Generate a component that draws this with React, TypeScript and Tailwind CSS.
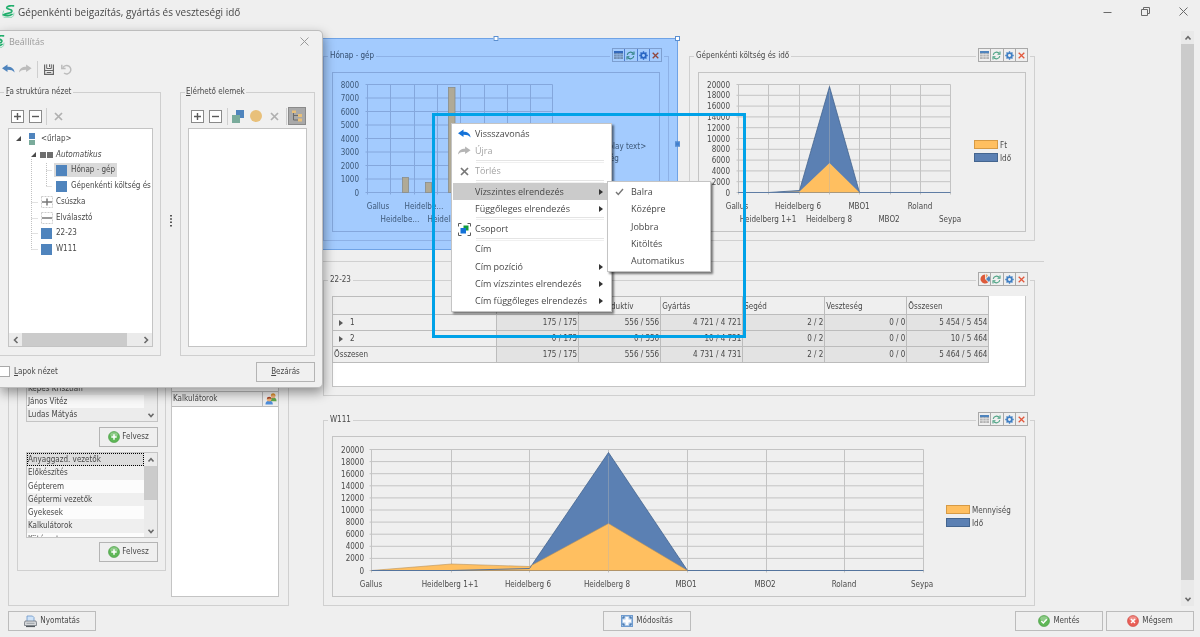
import type { ReactNode } from 'react';

type IconProps = { className?: string };

const AppLogo = ({ className = '' }: IconProps) => (
  <svg viewBox="0 0 13 13" className={`h-[13px] w-[13px] shrink-0 ${className}`} fill="none" stroke="#1fae6b" strokeLinecap="round">
    <path d="M1 11 Q0 9 1.5 6 M2 12.300 H10 Q12 11.500 12 8" stroke="#8fdab8" strokeWidth="1" />
    <path d="M11.500 .9 C8 .3 4.500 1.300 4.800 3 C5.200 4.600 10.500 4 9.800 6.500 C9 9 4 7.800 1.500 9.800 C4 11.200 8 10.800 10 9.400" strokeWidth="1.700" />
  </svg>
);

const Undo = ({ className = '' }: IconProps) => (
  <svg viewBox="0 0 13 10" className={`h-[10px] w-[13px] ${className}`} fill="currentColor">
    <path d="M0 4.300 L5.500 .6 V2.800 C9.500 2.800 12.300 4.600 12.600 8.600 C11 6.400 9 5.800 5.500 5.800 V8 Z" />
  </svg>
);

const Redo = ({ className = '' }: IconProps) => (
  <svg viewBox="0 0 13 10" className={`h-[10px] w-[13px] ${className}`} fill="currentColor">
    <path d="M12.600 4.300 L7.100 .6 V2.800 C3.100 2.800 .3 4.600 0 8.600 C1.600 6.400 3.600 5.800 7.100 5.800 V8 Z" />
  </svg>
);

const Cross = ({ className = '' }: IconProps) => (
  <svg viewBox="0 0 9 9" className={`h-[9px] w-[9px] ${className}`} stroke="currentColor" strokeWidth="1.700">
    <path d="M1 1 L8 8 M8 1 L1 8" />
  </svg>
);

const ThinCross = ({ className = '' }: IconProps) => (
  <svg viewBox="0 0 9 9" className={`h-[9px] w-[9px] ${className}`} stroke="currentColor" strokeWidth="1">
    <path d="M.5 .5 L8.500 8.500 M8.500 .5 L.5 8.500" />
  </svg>
);

const Save = () => (
  <svg viewBox="0 0 10 11" className="h-[11px] w-[10px]" fill="none" stroke="#666">
    <path d="M.6 .5 V10.400 H9.400 V.5" strokeWidth="1.200" />
    <path d="M2.700 .3 V4.500 H7.300 V.3 M5.500 .3 V3" />
    <path d="M.6 6.500 H9.400 M2.700 8.500 H7.300" />
  </svg>
);

const Reset = () => (
  <svg viewBox="0 0 11 11" className="h-[11px] w-[11px]" fill="none" stroke="#bcbcbc" strokeWidth="1.500">
    <path d="M2 3.600 A4.200 4.200 0 1 1 3 9" />
    <path d="M.8 .8 V4.400 H4.600" />
  </svg>
);

const ExpandBox = ({ plus = false }: { plus?: boolean }) => (
  <svg viewBox="0 0 13 13" className="h-[13px] w-[13px]" fill="#fff" stroke="#8a8a8a">
    <rect x=".5" y=".5" width="12" height="12" />
    <path d={plus ? 'M3 6.500 H10 M6.500 3 V10' : 'M3 6.500 H10'} stroke="#5a5a5a" strokeWidth="1.400" />
  </svg>
);

const GroupSquares = () => (
  <svg viewBox="0 0 14 14" className="h-[14px] w-[14px]">
    <rect x="5" y="1" width="8" height="8" fill="#4f84bd" />
    <rect x="1" y="6" width="8" height="8" fill="#7aab9b" />
  </svg>
);

const TreeGlyph = () => (
  <svg viewBox="0 0 12 12" className="h-[12px] w-[12px]">
    <path d="M2.500 2 V10 H7 M2.500 5.500 H7" fill="none" stroke="#6b6b6b" />
    <path d="M1 .5 H5 V3 H1 Z M7 4 H11 V7 H7 Z M7 8.500 H11 V11.500 H7 Z" fill="#e8c07a" />
  </svg>
);

const CsoportIcon = () => (
  <svg viewBox="0 0 13 13" className="h-[13px] w-[13px]">
    <path d="M3.500 .5 H.5 V3.500 M9.500 .5 H12.500 V3.500 M3.500 12.500 H.5 V9.500 M9.500 12.500 H12.500 V9.500" fill="none" stroke="#5a5a5a" />
    <rect x="5.500" y="2.500" width="5" height="5" fill="#0f9b3a" />
    <rect x="2.500" y="5" width="5.500" height="5.500" fill="#1472d8" />
  </svg>
);

const Check = () => (
  <svg viewBox="0 0 9 8" className="h-[8px] w-[9px]" fill="none" stroke="#777" strokeWidth="1.400">
    <path d="M1 4 L3.300 6.500 L8 1" />
  </svg>
);

const GridIcon = () => (
  <svg viewBox="0 0 9 8" className="h-[8px] w-[9px]">
    <rect width="9" height="8" fill="#b3b3b3" />
    <path d="M0 3.600 H9 M0 5.700 H9 M3 2 V8 M6 2 V8" stroke="#e6e6e6" strokeWidth=".7" />
    <rect width="9" height="2.200" fill="#4f84bd" />
  </svg>
);

const PieIcon = () => (
  <svg viewBox="0 0 10 10" className="h-[10px] w-[10px]">
    <path d="M5 5 L5 .5 A4.500 4.500 0 1 0 8.200 8.200 Z" fill="#dd5a3a" />
    <path d="M5.800 4.500 V0 A4.500 4.500 0 0 1 8 1.300 Z" fill="#e9a070" />
    <path d="M6 4.900 L9 2 A4.500 4.500 0 0 1 9 7.900 Z" fill="#4f84bd" />
  </svg>
);

const RefreshIcon = () => (
  <svg viewBox="0 0 9 9" className="h-[9px] w-[9px]" fill="none" stroke="#4aa283" strokeWidth="1.100">
    <path d="M1.200 3.800 A3.400 3.400 0 0 1 7.300 2.600 M7.800 5.200 A3.400 3.400 0 0 1 1.700 6.400" />
    <path d="M8 .6 V3.200 H5.500 M1 8.400 V5.800 H3.500" />
  </svg>
);

const GearIcon = () => (
  <svg viewBox="0 0 10 10" className="h-[9px] w-[9px]" fill="none" stroke="#3f7fc4">
    <circle cx="5" cy="5" r="2.600" strokeWidth="1.900" />
    <path d="M5 .3 V2 M5 8 V9.700 M.3 5 H2 M8 5 H9.700 M1.700 1.700 L2.800 2.800 M7.200 7.200 L8.300 8.300 M8.300 1.700 L7.200 2.800 M2.800 7.200 L1.700 8.300" strokeWidth="1.500" />
  </svg>
);

const RedCross = () => (
  <svg viewBox="0 0 8 8" className="h-[7px] w-[7px]" stroke="#e2583c" strokeWidth="1.500">
    <path d="M.8 .8 L7.200 7.200 M7.200 .8 L.8 7.200" />
  </svg>
);

const Badge = ({ kind }: { kind: 'add' | 'ok' | 'no' }) => (
  <svg viewBox="0 0 12 12" className="h-[12px] w-[12px]">
    <circle cx="6" cy="6" r="5.500" fill={kind === 'no' ? '#ea5f57' : '#5fb757'} stroke={kind === 'no' ? '#c9463f' : '#459a40'} strokeWidth=".6" />
    <ellipse cx="6" cy="3.600" rx="3.800" ry="2.400" fill="#fff" opacity=".3" />
    <path
      d={kind === 'add' ? 'M6 3.300 V8.700 M3.300 6 H8.700' : kind === 'ok' ? 'M3.300 6 L5.300 8 L8.800 4.300' : 'M4 4 L8 8 M8 4 L4 8'}
      fill="none"
      stroke="#fff"
      strokeWidth="1.500"
    />
  </svg>
);

const Printer = () => (
  <svg viewBox="0 0 13 13" className="h-[13px] w-[13px]">
    <path d="M3 6 V1 H8.500 L10 2.500 V6" fill="#cfe3f8" stroke="#6a95c8" strokeWidth=".8" />
    <path d="M1 6 H12 L12.500 8 V10.500 H.5 V8 Z" fill="#d7d9dc" stroke="#70757c" strokeWidth=".8" />
    <path d="M2 11.500 H11" stroke="#555a60" strokeWidth="1.200" />
    <path d="M2.500 8.300 H10.500" stroke="#8b9096" strokeWidth=".8" />
  </svg>
);

const ModifyIcon = () => (
  <svg viewBox="0 0 12 12" className="h-[12px] w-[12px]">
    <rect x=".5" y=".5" width="11" height="11" fill="#a9c7e8" stroke="#6f9bce" />
    <path d="M4.500 2 H7.500 V4.500 H10 V7.500 H7.500 V10 H4.500 V7.500 H2 V4.500 H4.500 Z" fill="#fbfcfe" />
    <path d="M2 2 H3.800 M2 2 V3.800 M10 2 H8.200 M10 2 V3.800 M2 10 H3.800 M2 10 V8.200 M10 10 H8.200 M10 10 V8.200" stroke="#2f65a3" strokeWidth="1" />
  </svg>
);

const People = () => (
  <svg viewBox="0 0 13 13" className="h-[12px] w-[12px]">
    <path d="M5.500 9 Q6 5 9 5 Q12.500 5 12.500 9 Z" fill="#63a94c" />
    <circle cx="8.800" cy="3.200" r="2.500" fill="#f0b27a" />
    <path d="M6.200 3 Q6.500 .3 9 .4 Q11.600 .6 11.400 3.300 Q10 1.800 6.200 3" fill="#d99130" />
    <path d="M.5 12.500 Q.5 8.500 4.500 8.500 Q8.500 8.500 8.500 12.500 Z" fill="#4f8fdc" />
    <circle cx="4.500" cy="6.800" r="2.500" fill="#f0b27a" />
    <path d="M2 6.600 Q2 4 4.500 4 Q7 4 7 6.600 Q5.500 5.400 2 6.600" fill="#a8452a" />
  </svg>
);

const Chevron = ({ d }: { d: string }) => (
  <svg viewBox="0 0 8 8" className="h-[8px] w-[8px]" fill="none" stroke="#6a6a6a" strokeWidth="1.600">
    <path d={d} />
  </svg>
);
const UP = 'M1.500 5.500 L4 2.700 L6.500 5.500';
const DOWN = 'M1.500 2.700 L4 5.500 L6.500 2.700';
const LEFT = 'M5.500 1 L2.500 4 L5.500 7';
const RIGHT = 'M2.500 1 L5.500 4 L2.500 7';

const Caret = ({ className = '' }: IconProps) => (
  <svg viewBox="0 0 4 6" className={`h-[6px] w-[4px] ${className}`} fill="currentColor">
    <path d="M0 0 L4 3 L0 6 Z" />
  </svg>
);

/* ---------- charts ---------- */

type Axis = { xs: number[]; top: number; bottom: number; labels: string[]; labelX: number; line: string; text: string };

function Plot({ xs, top, bottom, labels, labelX, line, text }: Axis) {
  const step = (bottom - top) / (labels.length - 1);
  return (
    <g>
      {labels.map((l, i) => (
        <g key={l}>
          <line x1={xs[0] - 2} x2={xs[xs.length - 1]} y1={top + i * step} y2={top + i * step} stroke={line} />
          <text x={labelX} y={top + i * step + 3} textAnchor="end" fill={text}>{l}</text>
        </g>
      ))}
      {xs.map((x) => <line key={x} x1={x} x2={x} y1={top} y2={bottom + 2} stroke={line} />)}
    </g>
  );
}

const TWENTY = ['20000', '18000', '16000', '14000', '12000', '10000', '8000', '6000', '4000', '2000', '0'];
const EIGHT = ['8000', '7000', '6000', '5000', '4000', '3000', '2000', '1000', '0'];

function Labels({ items, fill }: { items: [string, number, number][]; fill: string }) {
  return <>{items.map(([t, x, y]) => <text key={t + x} x={x} y={y} textAnchor="middle" fill={fill}>{t}</text>)}</>;
}

function Legend({ x, y, items }: { x: number; y: number; items: [string, string, string][] }) {
  return (
    <>
      {items.map(([t, fill, stroke], i) => (
        <g key={t}>
          <rect x={x + 0.5} y={y + i * 13 + 0.5} width="23" height="8" fill={fill} stroke={stroke} />
          <text x={x + 26} y={y + i * 13 + 8} fill="#4a4a4a">{t}</text>
        </g>
      ))}
    </>
  );
}

const BarChart = () => (
  <svg viewBox="333 73 326 158" className="block w-full text-[8px]">
    <Plot xs={[367.5, 390.5, 414.5, 437.5, 460.5, 484.5, 507.5, 530.5, 552.5]} top={84.5} bottom={192.5} labels={EIGHT} labelX={359} line="#84a7dc" text="#3d5878" />
    {[[402.5, 177.5, 6], [425.5, 182.5, 6], [448.5, 87.5, 6.5]].map(([x, y, w]) => (
      <rect key={x} x={x} y={y} width={w} height={192.5 - y} fill="#b0aa96" stroke="#8a8d88" strokeWidth=".8" />
    ))}
    <Labels fill="#3d5878" items={[['Gallus', 378, 209], ['Heidelbe…', 424, 209], ['Heidelbe…', 400, 222], ['Heidelbe…', 447, 222]]} />
    <text x="580" y="149" fill="#3d5878">&lt;No display text&gt;</text>
    <text x="580" y="161" fill="#3d5878">Mennyiség</text>
  </svg>
);

const CostChart = () => (
  <svg viewBox="699 73 326 158" className="block w-full text-[8px]">
    <Plot xs={[738.5, 768.5, 799.5, 829.5, 859.5, 890.5, 920.5, 950.5]} top={84.5} bottom={192.5} labels={TWENTY} labelX={730} line="#c3c3c3" text="#4a4a4a" />
    <path d="M738.500 192.500 L768.500 192.500 L799.500 190.500 L829.500 86.500 L859.500 192.500 Z" fill="#5b80b3" stroke="#44658f" strokeWidth=".8" />
    <path d="M768.500 192.500 L799.500 191.500 L829.500 163 L859.500 192.500 Z" fill="#ffbf60" />
    <path d="M829.500 90 V194" stroke="#b5b5b5" strokeWidth=".7" opacity=".6" />
    <path d="M738.500 192.500 H799.500 M859.500 192.500 H950.500" stroke="#5f7da4" />
    <Labels
      fill="#4a4a4a"
      items={[['Gallus', 737, 209], ['Heidelberg 6', 798, 209], ['MBO1', 859, 209], ['Roland', 920, 209], ['Heidelberg 1+1', 768, 222], ['Heidelberg 8', 829, 222], ['MBO2', 889, 222], ['Seypa', 950, 222]]}
    />
    <Legend x={974} y={140} items={[['Ft', '#ffbf60', '#d69a45'], ['Idő', '#5b80b3', '#44658f']]} />
  </svg>
);

const QuantityChart = () => (
  <svg viewBox="333 437 692 159" className="block w-full text-[8px]">
    <Plot xs={[371.5, 451.5, 529.5, 608.5, 687.5, 766.5, 844.5, 923.5]} top={449.5} bottom={570.5} labels={TWENTY} labelX={364} line="#c3c3c3" text="#4a4a4a" />
    <path d="M451.500 570.500 L529.500 568.500 L608.500 452.500 L687.500 570.500 Z" fill="#5b80b3" stroke="#44658f" strokeWidth=".8" />
    <path d="M371.500 570.500 L451.500 564 L529.500 566.500 L608.500 523.500 L687.500 570.500 Z" fill="#ffbf60" stroke="#b9925a" strokeWidth=".6" />
    <path d="M371.500 570.500 H451.500 L529.500 568.500 L531.500 565.500 M687.500 570.500 H923.500" fill="none" stroke="#54749d" />
    <path d="M608.500 456 V572" stroke="#b5b5b5" strokeWidth=".7" opacity=".6" />
    <Labels
      fill="#4a4a4a"
      items={[['Gallus', 371, 587], ['Heidelberg 1+1', 450, 587], ['Heidelberg 6', 528, 587], ['Heidelberg 8', 607, 587], ['MBO1', 686, 587], ['MBO2', 765, 587], ['Roland', 844, 587], ['Seypa', 922, 587]]}
    />
    <Legend x={946} y={505} items={[['Mennyiség', '#ffbf60', '#d69a45'], ['Idő', '#5b80b3', '#44658f']]} />
  </svg>
);

/* ---------- panels ---------- */

function Panel({ title, selected = false, pie = false, className = '', children }: { title: string; selected?: boolean; pie?: boolean; className?: string; children: ReactNode }) {
  const tools: [string, ReactNode][] = [
    [pie ? 'Diagram' : 'Táblázat', pie ? <PieIcon /> : <GridIcon />],
    ['Frissítés', <RefreshIcon />],
    ['Beállítások', <GearIcon />],
    ['Eltávolítás', <RedCross />],
  ];
  return (
    <section className={`relative ${className}`}>
      <fieldset className={`min-w-0 border ${selected ? 'border-[#8db1e6]' : 'border-[#d0d0d0]'}`}>
        <legend className={`ml-[4px] px-[2px] leading-[12px] ${selected ? 'text-[#324b6b]' : ''}`}>{title}</legend>
        <div className={`mx-[8px] mt-[10px] mb-[8px] border ${selected ? 'border-[#84a7dc]' : 'border-[#c4c4c4]'}`}>{children}</div>
      </fieldset>
      <div className={`absolute -top-[2px] right-[5px] px-[2px] ${selected ? 'bg-[#a3cbfe]' : 'bg-[#efefef]'}`}>
        <div className={`flex h-[14px] w-[50px] divide-x border ${selected ? 'divide-[#7d9fd0] border-[#7d9fd0]' : 'divide-[#a9a9a9] border-[#a9a9a9]'}`}>
          {tools.map(([label, icon]) => (
            <button key={label} aria-label={label} className={`flex flex-1 items-center justify-center ${selected ? 'mix-blend-multiply' : ''}`}>{icon}</button>
          ))}
        </div>
      </div>
    </section>
  );
}

const HEAD = ['', 'Beigazítás', 'Nem produktív', 'Gyártás', 'Segéd', 'Veszteség', 'Összesen'];
const ROWS = [
  ['1', '175 / 175', '556 / 556', '4 721 / 4 721', '2 / 2', '0 / 0', '5 454 / 5 454'],
  ['2', '0 / 175', '0 / 556', '10 / 4 731', '0 / 2', '0 / 0', '10 / 5 464'],
  ['Összesen', '175 / 175', '556 / 556', '4 731 / 4 731', '2 / 2', '0 / 0', '5 464 / 5 464'],
];

const TimeTable = () => (
  <div className="h-[90px] bg-white">
    <table className="-mt-px -ml-px h-[67px] w-[95%] table-fixed border-collapse leading-[12px]">
      <colgroup>
        <col className="w-1/4" />
      </colgroup>
      <thead>
        <tr className="h-[18px] bg-[#efefef]">
          {HEAD.map((h) => (
            <th key={h} className="border border-[#bcbcbc] p-0 pt-[2px] pl-px text-left align-middle font-normal whitespace-nowrap">{h}</th>
          ))}
        </tr>
      </thead>
      <tbody>
        {ROWS.map((r) => (
          <tr key={r[0]}>
            {r.map((c, i) =>
              i === 0 ? (
                <th key={i} className="border border-[#bcbcbc] bg-[#efefef] p-0 pt-px pl-px text-left align-middle font-normal">
                  {c.length === 1 ? <span className="flex items-center gap-[7px] pl-[5px]"><Caret className="text-[#5a5a5a]" />{c}</span> : c}
                </th>
              ) : (
                <td key={i} className="border border-[#bcbcbc] bg-[#e3e3e3] p-0 pt-px pr-px text-right align-middle">{c}</td>
              ),
            )}
          </tr>
        ))}
      </tbody>
    </table>
  </div>
);

/* ---------- left pane ---------- */

const AddButton = () => (
  <button className="flex h-[20px] w-[59px] items-center justify-center gap-[2px] self-end border border-[#b4b4b4]">
    <Badge kind="add" />Felvesz
  </button>
);

const VScroll = ({ thumb = '', up = true }: { thumb?: string; up?: boolean }) => (
  <div className="flex w-[13px] shrink-0 flex-col items-center bg-[#ebebeb]">
    {up && <span className="flex h-[13px] items-center"><Chevron d={UP} /></span>}
    {thumb && <span className={`w-full bg-[#cbcbcb] ${thumb}`} />}
    <span className="mt-auto flex h-[13px] items-center"><Chevron d={DOWN} /></span>
  </div>
);

const GROUPS = ['Anyaggazd. vezetők', 'Előkészítés', 'Gépterem', 'Géptermi vezetők', 'Gyekesek', 'Kalkulátorok', 'Kötészet'];

const LeftPane = () => (
  <aside className="mt-[20px] ml-[8px] flex w-[281px] shrink-0 gap-[5px] self-stretch border border-[#d0d0d0] pr-[9px] pl-[8px]">
    <div className="mb-[34px] flex flex-1 flex-col justify-end border border-[#d0d0d0] pr-[7px] pb-[8px] pl-[8px]">
      <div className="flex h-[67px] border border-[#c4c4c4]">
        <ul className="grid flex-1 content-end leading-[13px]">
          <li className="bg-[#ececec] pl-px">Képes Krisztián</li>
          <li className="bg-[#f8f8f8] pl-px">János Vitéz</li>
          <li className="bg-[#ececec] pl-px">Ludas Mátyás</li>
        </ul>
        <VScroll up={false} />
      </div>
      <div className="mt-[5px] flex flex-col"><AddButton /></div>
      <div className="mt-[5px] flex h-[86px] overflow-hidden border border-[#c4c4c4]">
        <ul className="grid h-[93px] flex-1 grid-rows-7 leading-[13px]">
          {GROUPS.map((g, i) => (
            <li key={g} className={i === 0 ? 'border border-dotted border-black bg-[#dcdcdc] leading-[12px]' : i % 2 ? 'bg-[#efefef] pl-px' : 'bg-[#fcfcfc] pl-px'}>{g}</li>
          ))}
        </ul>
        <VScroll thumb="h-[34px]" />
      </div>
      <div className="mt-[4px] flex flex-col"><AddButton /></div>
    </div>
    <div className="mb-[8px] flex w-[108px] flex-col border border-[#c4c4c4] bg-white">
      <div className="mt-[345px] flex h-[16px] items-center border-y border-[#bcbcbc] bg-[#efefef]">
        <span className="flex-1 pl-px">Kalkulátorok</span>
        <span className="flex h-full w-[16px] items-center justify-center border-l border-[#bcbcbc]"><People /></span>
      </div>
    </div>
  </aside>
);

/* ---------- settings dialog ---------- */

const Square = () => <span className="h-[11px] w-[11px] bg-[#4f84bd]" />;

const TREE: { level: string; open?: boolean; icon: ReactNode; text: string; style?: string }[] = [
  { level: 'pl-[4px]', open: true, text: '<űrlap>', icon: <span className="flex flex-col gap-px"><i className="h-[6px] w-[6px] bg-[#4f84bd]" /><i className="h-[5px] w-[6px] bg-[#7aab9b]" /></span> },
  { level: 'pl-[19px]', open: true, text: 'Automatikus', style: 'italic', icon: <span className="flex gap-px"><i className="h-[6px] w-[6px] bg-[#6e6e6e]" /><i className="h-[6px] w-[6px] bg-[#6e6e6e]" /></span> },
  { level: 'pl-[34px]', text: 'Hónap - gép', style: 'bg-[#dadada]', icon: <Square /> },
  { level: 'pl-[34px]', text: 'Gépenkénti költség és idő', icon: <Square /> },
  {
    level: 'pl-[19px]', text: 'Csúszka',
    icon: <svg viewBox="0 0 12 12" className="h-[12px] w-[12px]" fill="none" stroke="#777"><rect x=".5" y=".5" width="11" height="11" stroke="#ccc" strokeDasharray="2 1" /><path d="M1 6 H11" strokeWidth="1.500" /><path d="M6 2.500 V9.500" strokeWidth="1.500" /></svg>,
  },
  {
    level: 'pl-[19px]', text: 'Elválasztó',
    icon: <svg viewBox="0 0 12 12" className="h-[12px] w-[12px]" fill="none" stroke="#777"><rect x=".5" y=".5" width="11" height="11" stroke="#ccc" strokeDasharray="2 1" /><path d="M1 6 H11" strokeWidth="1.500" /></svg>,
  },
  { level: 'pl-[19px]', text: '22-23', icon: <Square /> },
  { level: 'pl-[19px]', text: 'W111', icon: <Square /> },
];

const Divider = ({ className = '' }: IconProps) => <span className={`h-[17px] w-px bg-[#cfcfcf] ${className}`} />;

const SettingsDialog = () => (
  <div role="dialog" aria-label="Beállítás" className="absolute top-[30px] left-0 flex h-[358px] w-[323px] flex-col rounded-r-[5px] border-y border-r border-[#bdbdbd] bg-[#f0f0f0] shadow-[1px_5px_12px_rgba(0,0,0,0.4)]">
    <div className="flex h-[21px] items-center pr-[13px] font-['Open_Sans',sans-serif] text-[9px] text-[#9a9a9a]">
      <AppLogo className="-ml-[8px]" />
      <span className="ml-[4px]">Beállítás</span>
      <button aria-label="Bezárás" className="ml-auto text-[#9a9a9a]"><ThinCross /></button>
    </div>
    <div className="mt-[8px] flex h-[18px] items-center pl-[2px]">
      <button aria-label="Visszavonás"><Undo className="text-[#4f84bd]" /></button>
      <button aria-label="Újra" className="ml-[4px]"><Redo className="text-[#bcbcbc]" /></button>
      <Divider className="ml-[5px]" />
      <button aria-label="Mentés" className="ml-[6px]"><Save /></button>
      <button aria-label="Alaphelyzet" className="ml-[7px]"><Reset /></button>
    </div>
    <div className="mt-[8px] flex h-[270px] items-stretch">
      <fieldset className="w-[161px] min-w-0 border border-l-0 border-[#cfcfcf]">
        <legend className="ml-[4px] px-[2px] leading-[12px]"><u>F</u>a struktúra nézet</legend>
        <div className="mt-[6px] flex h-[24px] items-center pl-[11px]">
          <button aria-label="Kibontás"><ExpandBox plus /></button>
          <button aria-label="Összecsukás" className="ml-[5px]"><ExpandBox /></button>
          <Divider className="ml-[4px]" />
          <button aria-label="Törlés" className="ml-[7px]"><Cross className="text-[#b0b0b0]" /></button>
        </div>
        <div className="mr-[7px] ml-[8px] flex h-[219px] flex-col border border-[#c4c4c4] bg-white">
          <div className="relative flex-1 overflow-hidden">
            <svg viewBox="0 0 60 126" className="absolute top-[2px] left-0 h-[126px] w-[60px]" fill="none" stroke="#c2c2c2" strokeDasharray="1 1">
              <path d="M22.500 28 V118.500 M22.500 71.500 H29 M22.500 87.500 H29 M22.500 102.500 H29 M22.500 118.500 H29 M37.500 32 V55.500 M37.500 39.500 H43 M37.500 55.500 H43" />
            </svg>
            <ul className="relative mt-[2px] grid h-[126px] grid-rows-8">
              {TREE.map((n) => (
                <li key={n.text} className={`flex items-center ${n.level}`}>
                  <span className="flex w-[11px] shrink-0 justify-center">
                    {n.open && <svg viewBox="0 0 6 6" className="h-[5px] w-[5px]"><path d="M6 0 V6 H0 Z" fill="#4a4a4a" /></svg>}
                  </span>
                  <span className={`flex h-[14px] items-center whitespace-nowrap ${n.style ?? ''}`}>
                    <span className="flex w-[15px] shrink-0 justify-center">{n.icon}</span>
                    <span className="pr-[2px] pl-[2px]">{n.text}</span>
                  </span>
                </li>
              ))}
            </ul>
          </div>
          <div className="flex h-[13px] items-center bg-[#ebebeb]">
            <span className="flex w-[13px] justify-center"><Chevron d={LEFT} /></span>
            <span className="h-full w-[105px] bg-[#cbcbcb]" />
            <span className="ml-auto flex w-[13px] justify-center"><Chevron d={RIGHT} /></span>
          </div>
        </div>
      </fieldset>
      <svg viewBox="0 0 2 12" className="mr-[8px] ml-[9px] h-[12px] w-[2px] self-center" fill="#555"><path d="M0 0h2v1.500h-2z M0 3.300h2v1.500h-2z M0 6.600h2v1.500h-2z M0 9.900h2v1.500h-2z" /></svg>
      <fieldset className="mr-[7px] min-w-0 flex-1 border border-[#cfcfcf]">
        <legend className="ml-[4px] px-px leading-[12px]"><u>E</u>lérhető elemek</legend>
        <div className="mt-[6px] flex h-[24px] items-center pl-[10px]">
          <button aria-label="Kibontás"><ExpandBox plus /></button>
          <button aria-label="Összecsukás" className="ml-[5px]"><ExpandBox /></button>
          <Divider className="ml-[5px]" />
          <button aria-label="Csoport" className="ml-[3px]"><GroupSquares /></button>
          <button aria-label="Elem" className="ml-[5px] h-[12px] w-[12px] rounded-full bg-[#e8c07a]" />
          <button aria-label="Törlés" className="ml-[8px]"><Cross className="text-[#b0b0b0]" /></button>
          <Divider className="ml-[7px]" />
          <button aria-label="Fa nézet" className="ml-px flex h-[18px] w-[18px] items-center justify-center border border-[#8a8a8a] bg-[#a9a9a9]"><TreeGlyph /></button>
        </div>
        <div className="mx-[7px] h-[219px] border border-[#c4c4c4] bg-white" />
      </fieldset>
    </div>
    <div className="flex flex-1 items-center justify-between pr-[7px]">
      <label className="flex items-center gap-[4px]">
        <input type="checkbox" className="h-[11px] w-[10px] appearance-none border border-l-0 border-[#a9a9a9] bg-white" />
        <span><u>L</u>apok nézet</span>
      </label>
      <button className="h-[20px] w-[59px] border border-[#b4b4b4]"><u>B</u>ezárás</button>
    </div>
  </div>
);

/* ---------- context menu ---------- */

type Item = { text: string; icon?: ReactNode; disabled?: boolean; sub?: boolean; active?: boolean } | 'separator';

const MENU: Item[] = [
  { text: 'Vissszavonás', icon: <Undo className="text-[#1472d8]" /> },
  { text: 'Újra', icon: <Redo className="text-[#b5b5b5]" />, disabled: true },
  'separator',
  { text: 'Törlés', icon: <Cross className="text-[#777]" />, disabled: true },
  'separator',
  { text: 'Vízszintes elrendezés', sub: true, active: true },
  { text: 'Függőleges elrendezés', sub: true },
  'separator',
  { text: 'Csoport', icon: <CsoportIcon /> },
  'separator',
  { text: 'Cím' },
  { text: 'Cím pozíció', sub: true },
  { text: 'Cím vízszintes elrendezés', sub: true },
  { text: 'Cím függőleges elrendezés', sub: true },
];

const ContextMenu = () => (
  <>
    <ul role="menu" className="absolute top-[123px] left-[451px] flex h-[189px] w-[161px] flex-col border border-[#c4c4c4] bg-white p-px font-['Open_Sans',sans-serif] text-[9px] shadow-[2px_2px_2px_rgba(0,0,0,0.5)]">
      {MENU.map((m, i) =>
        m === 'separator' ? (
          <li key={i} role="separator" className="mr-[6px] ml-[23px] h-[3px] border-y border-t-[#e4e4e4] border-b-[#f0f0f0]" />
        ) : (
          <li key={i} role="none" className="flex-1">
            <button role="menuitem" disabled={m.disabled} className={`flex h-full w-full items-center pr-[7px] text-left whitespace-nowrap ${m.active ? 'bg-[#cbcbcb]' : ''} ${m.disabled ? 'text-[#a3a3a3]' : ''}`}>
              <span className="flex w-[22px] shrink-0 justify-center">{m.icon}</span>
              <span className="flex-1">{m.text}</span>
              {m.sub && <Caret className="text-[#333]" />}
            </button>
          </li>
        ),
      )}
    </ul>
    <ul role="menu" className="absolute top-[181px] left-[607px] flex h-[91px] w-[104px] flex-col border border-[#c4c4c4] bg-white py-px font-['Open_Sans',sans-serif] text-[9px] shadow-[2px_2px_2px_rgba(0,0,0,0.5)]">
      {['Balra', 'Középre', 'Jobbra', 'Kitöltés', 'Automatikus'].map((t, i) => (
        <li key={t} role="none" className="flex-1">
          <button role="menuitem" className="flex h-full w-full items-center">
            <span className="flex w-[23px] justify-center">{i === 0 && <Check />}</span>{t}
          </button>
        </li>
      ))}
    </ul>
  </>
);

/* ---------- window ---------- */

const FooterButton = ({ icon, children, className = '' }: { icon: ReactNode; children: ReactNode; className?: string }) => (
  <button className={`flex h-[20px] w-[88px] items-center justify-center gap-[3px] border border-[#bcbcbc] ${className}`}>{icon}{children}</button>
);

const Handle = ({ className }: { className: string }) => <span className={`absolute h-[5px] w-[5px] border border-[#5b8fd0] ${className}`} />;

export default function App() {
  return (
    <div className="relative flex min-h-screen w-full flex-col overflow-hidden bg-[#efefef] font-['DejaVu_Sans_Condensed','DejaVu_Sans',sans-serif] text-[8px] leading-[12px] text-[#484848]">
      <header className="flex h-[24px] shrink-0 items-center pr-[12px] pb-px pl-[2px] font-['Open_Sans',sans-serif] text-[10px]">
        <AppLogo />
        <h1 className="ml-[3px]">Gépenkénti beigazítás, gyártás és veszteségi idő</h1>
        <div className="ml-auto flex items-center gap-[29px] text-[#6a6a6a]">
          <button aria-label="Kis méret"><svg viewBox="0 0 9 9" className="h-[9px] w-[9px]" stroke="currentColor"><path d="M.5 5.500 H8.500" /></svg></button>
          <button aria-label="Visszaállítás"><svg viewBox="0 0 9 9" className="h-[9px] w-[9px]" stroke="currentColor" fill="none"><path d="M.5 2.500 H6.500 V8.500 H.5 Z M2.500 2.500 V.5 H8.500 V6.500 H6.500" /></svg></button>
          <button aria-label="Bezárás"><ThinCross /></button>
        </div>
      </header>

      <div className="flex">
        <LeftPane />
        <main className="mr-[137px] ml-[25px] min-w-0 flex-1 pt-[14px]">
          <div className="grid grid-cols-2 gap-[2px]">
            <div className="relative border border-[#6fa3e6] bg-[#a3cbfe] px-[8px] pt-[11px] pb-[8px]">
              <Panel title="Hónap - gép" selected><BarChart /></Panel>
              <Handle className="-top-[3px] left-1/2 -translate-x-1/2 bg-white" />
              <Handle className="-top-[3px] -right-[3px] bg-white" />
              <Handle className="top-1/2 -right-[3px] -translate-y-1/2 bg-[#3f7fd0]" />
            </div>
            <div className="px-[9px] pt-[12px] pb-[9px]">
              <Panel title="Gépenkénti költség és idő"><CostChart /></Panel>
            </div>
          </div>
          <div className="mt-[11px] ml-[9px] h-px bg-[#d0d0d0]" />
          <Panel title="22-23" pie className="mx-[9px] mt-[12px]"><TimeTable /></Panel>
          <Panel title="W111" className="mx-[9px] mt-[18px]"><QuantityChart /></Panel>
        </main>
        <div className="mt-[7px] mr-[6px] flex w-[13px] shrink-0 flex-col items-center bg-[#e9e9e9]">
          <span className="flex h-[13px] items-center"><Chevron d={UP} /></span>
          <span className="w-full flex-1 bg-[#cbcbcb]" />
          <span className="flex h-[26px] items-end pb-[3px]"><Chevron d={DOWN} /></span>
        </div>
      </div>

      <footer className="flex pt-[5px] pr-[6px] pb-[5px] pl-[8px]">
        <FooterButton icon={<Printer />}>Nyomtatás</FooterButton>
        <FooterButton icon={<ModifyIcon />} className="ml-[507px]">Módosítás</FooterButton>
        <div className="ml-auto flex gap-[3px]">
          <FooterButton icon={<Badge kind="ok" />}>Mentés</FooterButton>
          <FooterButton icon={<Badge kind="no" />}>Mégsem</FooterButton>
        </div>
      </footer>

      <SettingsDialog />
      <ContextMenu />
      <div aria-hidden="true" className="pointer-events-none absolute top-[113px] left-[432px] h-[225px] w-[314px] border-3 border-[#00a2e8]" />
    </div>
  );
}
